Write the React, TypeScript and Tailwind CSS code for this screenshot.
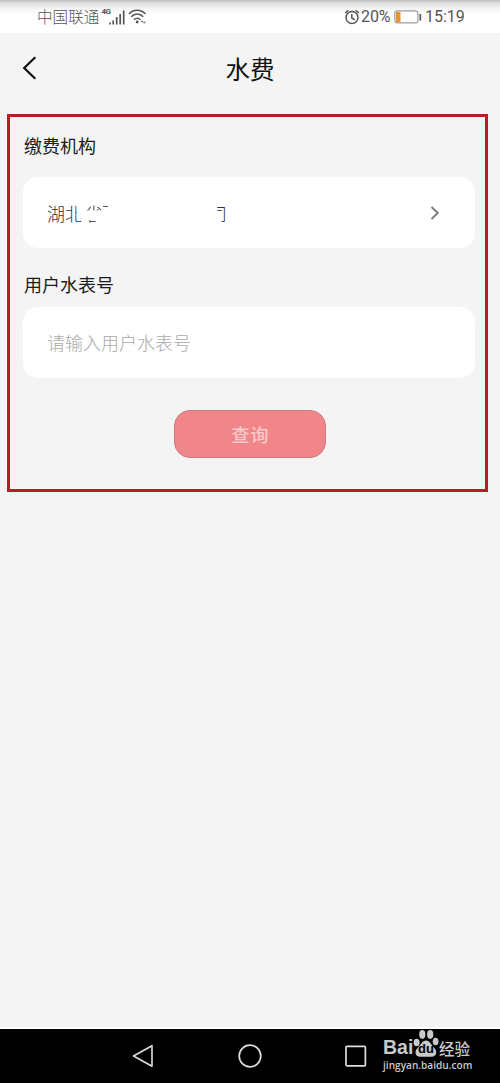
import type { ReactNode } from "react";

function StatusBar() {
  return (
    <header className="flex h-[33px] items-center bg-white bg-[linear-gradient(#bdbdbd,#dedede_3px,#f5f5f5_9px,#fff_15px)] pr-[36px] pl-[37px] text-[#555]">
      <span className="text-[15.6px] leading-[33px] font-light">中国联通</span>
      <span className="mb-[9px] ml-[2px] w-[8px] font-['Roboto'] text-[8px] leading-[8px] font-bold tracking-[-0.6px]">
        4G
      </span>
      <svg className="h-4 w-4" viewBox="0 0 16 16" stroke="#555" strokeWidth="1.7">
        <path d="M1 15.500v-2M4.200 15.500v-4M7.700 15.500V8M11.200 15.500V5M14.700 15.500V1.500" />
      </svg>
      <svg
        className="ml-[3px] h-[17px] w-[19px]"
        viewBox="0 0 19 17"
        fill="none"
        stroke="#555"
        strokeWidth="1.5"
      >
        <path d="M1 6C5 1 13 1 17.500 6M3.200 8.800c3.500-3.700 8.500-3.700 12 0M6 11.800c2-2 4.500-2 6.500 0" />
        <circle cx="9.2" cy="14" r="1.4" fill="#555" stroke="none" />
        <path d="M13.200 13.500h1.600M15.400 14.500h1.800" />
      </svg>

      <div className="ml-auto flex items-center">
        <svg
          className="h-4 w-4"
          viewBox="0 0 16 16"
          fill="none"
          stroke="#555"
          strokeWidth="1.5"
        >
          <circle cx="7" cy="8.5" r="6" />
          <path d="M6.800 5v4l3 1.800M.3 4 3.300 1.200M10.700 1.200 13.900 4" />
        </svg>
        <span className="w-[31px] font-['Roboto'] text-[16px] leading-[35px] tracking-[-0.1px]">
          20%
        </span>
        <svg className="ml-[2px] h-[14px] w-[28px]" viewBox="0 0 28 14" fill="none">
          <rect x=".9" y=".9" width="23" height="12" rx="2" stroke="#858585" />
          <rect x="2" y="2" width="4.5" height="10" fill="#e9952f" />
          <path d="M26.300 4v6.500" stroke="#555" strokeWidth="1.7" />
        </svg>
        <span className="ml-[3px] w-[39px] font-['Roboto'] text-[16px] leading-[35px]">
          15:19
        </span>
      </div>
    </header>
  );
}

function TitleBar() {
  return (
    <div className="grid h-[81px] grid-cols-[1fr_auto_1fr] items-start pt-[15px]">
      <button aria-label="返回" className="ml-[22px] h-10 w-4">
        <svg
          className="h-10 w-4"
          viewBox="0 0 16 40"
          fill="none"
          stroke="#111"
          strokeWidth="2.2"
        >
          <path d="M13.300 9.200 2.200 20l11.100 10.800" />
        </svg>
      </button>
      <h1 className="text-[24.5px] leading-[41px] font-normal text-[#111]">水费</h1>
    </div>
  );
}

function Field({ label, children }: { label: string; children: ReactNode }) {
  return (
    <div>
      <div className="h-[26px] pl-px text-[18px] leading-[24px] text-[#1c1c20]">{label}</div>
      {children}
    </div>
  );
}

function NavBar() {
  return (
    <nav className="flex h-[56px] items-center border-t-2 border-white bg-black pl-[132px]">
      <svg className="h-6 w-6" viewBox="0 0 24 24" fill="none" stroke="#ddd" strokeWidth="1.6">
        <path d="M1.500 12 20 1.700v20.600Z" strokeLinejoin="round" />
      </svg>
      <svg
        className="ml-[82px] h-6 w-6"
        viewBox="0 0 24 24"
        fill="none"
        stroke="#ddd"
        strokeWidth="1.7"
      >
        <circle cx="12" cy="12" r="10.8" />
      </svg>
      <svg
        className="ml-[82px] h-6 w-6"
        viewBox="0 0 24 24"
        fill="none"
        stroke="#ddd"
        strokeWidth="1.7"
      >
        <rect x="2" y="2.4" width="19.4" height="19.4" rx="1" />
      </svg>
      <div className="ml-[15px] h-[54px] text-[#c9c9c9]">
        <div className="flex h-[29px] items-end">
          <span className="mb-px w-[30px] font-['Liberation_Sans'] text-[19.5px] leading-[20px] font-bold">
            Bai
          </span>
          <div className="relative h-[29px] w-[26px]">
            <svg className="h-[29px] w-[26px]" viewBox="0 0 26 29" fill="#c9c9c9">
              <ellipse cx="3.6" cy="13.5" rx="3" ry="3.8" />
              <ellipse cx="9.3" cy="5.5" rx="3.1" ry="4.4" />
              <ellipse cx="17.2" cy="5.5" rx="3.1" ry="4.4" />
              <ellipse cx="22.600" cy="12.500" rx="2.9" ry="3.8" />
              <path d="M13 11.500c4 0 5 4.500 8.300 7.500 3.700 4 1.700 8.800-2.500 8.800-3 0-8.600-.2-11.600 0-4.500.2-6.500-4.800-2.700-8.800C8 16 9 11.500 13 11.500Z" />
            </svg>
            <span className="absolute inset-x-0 bottom-[3px] text-center font-['Liberation_Sans'] text-[13px] leading-[13px] font-bold text-black">
              du
            </span>
          </div>
          <span className="mb-px -mr-1 text-[15.5px] leading-[18px] font-medium">经验</span>
        </div>
        <div className="font-['Open_Sans'] text-[10.1px] leading-[14px] font-semibold whitespace-nowrap">
          jingyan.baidu.com
        </div>
      </div>
    </nav>
  );
}

export default function App() {
  return (
    <div className="flex h-[1083px] w-[500px] flex-col overflow-hidden bg-[#f4f4f4] font-['Noto_Sans_CJK_SC',sans-serif]">
      <StatusBar />
      <TitleBar />
      <main className="flex-1">
        <section className="ml-[7px] h-[378px] w-[481px] border-[3px] border-[#b41f25] px-[13px] pt-[16px]">
          <Field label="缴费机构">
            <div className="mt-[18px] flex h-[71px] w-[452px] items-center rounded-[15px] bg-white pl-[24px] text-[18px] leading-[26px] font-light text-[#333]">
              <span>湖</span>
              <span className="[clip-path:polygon(0_0,65%_0,65%_70%,90%_70%,90%_100%,0_100%)]">
                北
              </span>
              {/* Only the edges of the masked name stay visible */}
              <span className="ml-[2px] [clip-path:polygon(0_0,90%_0,90%_42%,0_42%,0_80%,60%_80%,60%_100%,0_100%)]">
                省
              </span>
              <span className="h-px w-[5px] -translate-y-[6px] bg-[#555]" />
              <span className="ml-[101px] [clip-path:polygon(46%_0,100%_0,100%_100%,70%_100%,70%_52%,46%_52%)]">
                司
              </span>
              <svg
                className="mr-[34px] ml-auto h-4 w-3"
                viewBox="0 0 12 16"
                fill="none"
                stroke="#777"
                strokeWidth="1.8"
              >
                <path d="m2.500 2 6.300 6-6.300 6" />
              </svg>
            </div>
          </Field>
          <div className="mt-[24px]">
            <Field label="用户水表号">
              <input
                className="mt-[9px] block h-[71px] w-[452px] rounded-[15px] bg-white pr-5 pb-[2px] pl-[24px] text-[18px] font-light outline-none placeholder:text-[#aaa]"
                placeholder="请输入用户水表号"
              />
            </Field>
          </div>
          <button className="mt-[32px] ml-[151px] block h-[48px] w-[152px] rounded-[16px] border border-[#cb7c80] bg-[#f0868a] pl-px text-[18px] leading-[46px] font-medium tracking-[1px] text-[#f9c9cb]">
            查询
          </button>
        </section>
      </main>
      <NavBar />
    </div>
  );
}
